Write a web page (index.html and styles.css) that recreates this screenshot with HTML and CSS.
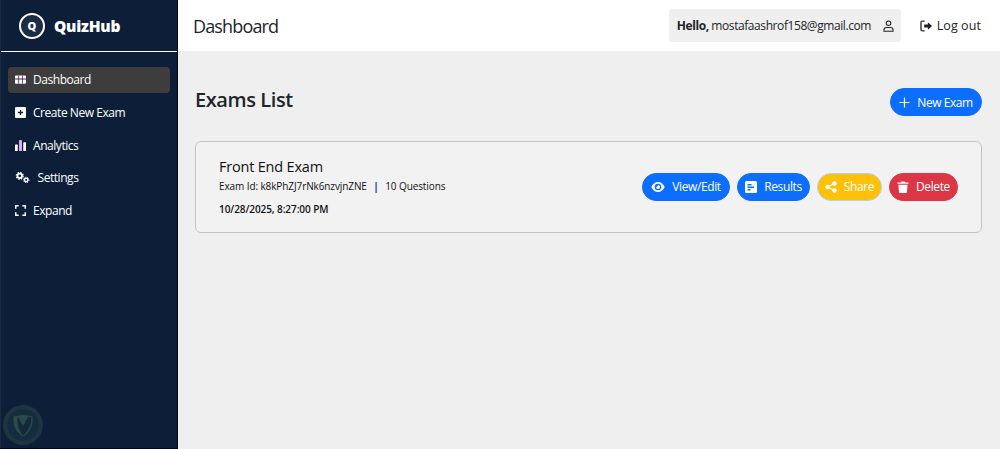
FILE: index.html
```html
<!DOCTYPE html>
<html lang="en">
<head>
<meta charset="utf-8">
<title>QuizHub</title>
<link rel="stylesheet" href="styles.css">
</head>
<body>
<div class="app">
  <aside class="sidebar">
    <div class="brand">
      <span class="logo">Q</span>
      <span class="brand-name">QuizHub</span>
    </div>
    <nav class="nav">
      <a class="nav-item active">
        <svg class="nav-icon" viewBox="0 0 12 10"><path fill="#fff" d="M0 1.500a1 1 0 0 1 1-1h10a1 1 0 0 1 1 1v7a1 1 0 0 1-1 1H1a1 1 0 0 1-1-1z"/><path fill="#5a1f63" d="M0 4h12v1H0zM3.600 .5h.9v9h-.9zM7.600 .5h.9v9h-.9z"/></svg>
        Dashboard
      </a>
      <a class="nav-item">
        <svg class="nav-icon" viewBox="0 0 12 12"><rect width="12" height="12" rx="1.200" fill="#fff"/><path d="M5.300 3.200h1.400v2.100h2.100v1.400H6.700v2.100H5.300V6.700H3.200V5.300h2.100z" fill="#0d1f38"/></svg>
        Create New Exam
      </a>
      <a class="nav-item">
        <svg class="nav-icon" viewBox="0 0 12 12"><rect x="0" y="5" width="3" height="7" rx=".6" fill="#fff"/><rect x="4.400" y="0" width="3.200" height="12" rx=".6" fill="#e6a8ff"/><rect x="9" y="2.500" width="3" height="9.500" rx=".6" fill="#fff"/></svg>
        Analytics
      </a>
      <a class="nav-item settings">
        <svg class="nav-icon gears" viewBox="0 0 16 12"><circle cx="5" cy="4.200" r="2.500" fill="none" stroke="#fff" stroke-width="2"/><circle cx="5" cy="4.200" r="3.800" fill="none" stroke="#fff" stroke-width="1.200" stroke-dasharray="1.500 1.500"/><circle cx="12" cy="8.700" r="1.900" fill="none" stroke="#fff" stroke-width="1.600"/><circle cx="12" cy="8.700" r="3" fill="none" stroke="#fff" stroke-width="1" stroke-dasharray="1.200 1.200"/></svg>
        Settings
      </a>
      <a class="nav-item">
        <svg class="nav-icon" viewBox="0 0 12 12"><path fill="none" stroke="#fff" stroke-width="1.600" d="M.8 4V.8H4M8 .8h3.200V4M11.200 8v3.200H8M4 11.200H.8V8"/></svg>
        Expand
      </a>
    </nav>
    <div class="watermark">
      <svg viewBox="0 0 40 40" class="watermark-mark"><circle cx="20" cy="20" r="19" fill="#2e4a4a" opacity=".5"/><circle cx="20" cy="20" r="15" fill="#162c3e"/><path d="M11 12c6-2 12-2 18 0 1 8-2 15-9 19-7-4-10-11-9-19z" fill="#2c4a4a"/><path d="M15 12l5 9 5-9 3 1c0 7-3 13-8 17-4-5-6-11-5-18z" fill="#14283e"/></svg>
    </div>
  </aside>
  <div class="main">
    <header class="topbar">
      <h1 class="page-title">Dashboard</h1>
      <div class="top-actions">
        <div class="user-chip">
          <span class="hello"><b>Hello,</b> mostafaashrof158@gmail.com</span>
          <svg class="user-icon" viewBox="0 0 12 13"><circle cx="6" cy="3.500" r="2.500" fill="none" stroke="#222" stroke-width="1.100"/><path d="M1 12.200v-1c0-1.800 1.400-3 3-3h4c1.600 0 3 1.200 3 3v1z" fill="none" stroke="#222" stroke-width="1.100"/></svg>
        </div>
        <a class="logout">
          <svg class="logout-icon" viewBox="0 0 14 13"><path d="M5 1.200H2.500A1.500 1.500 0 0 0 1 2.700v7.600a1.500 1.500 0 0 0 1.500 1.500H5" fill="none" stroke="#333" stroke-width="1.500"/><path d="M8.500 2.500l4.500 4-4.500 4V8H4.500V5h4z" fill="#222"/></svg>
          Log out
        </a>
      </div>
    </header>
    <main class="content">
      <div class="content-head">
        <h2 class="list-title">Exams List</h2>
        <button class="pill blue new-exam">
          <svg class="plus" viewBox="0 0 12 12"><path d="M6 .5v11M.5 6h11" stroke="#fff" stroke-width="1.300" fill="none"/></svg>
          New Exam
        </button>
      </div>
      <section class="card">
        <div class="card-info">
          <h3 class="exam-name">Front End Exam</h3>
          <p class="exam-meta">Exam Id: k8kPhZJ7rNk6nzvjnZNE <span class="sep">|</span> 10 Questions</p>
          <p class="exam-date">10/28/2025, 8:27:00 PM</p>
        </div>
        <div class="card-actions">
          <button class="pill blue">
            <svg class="btn-icon" viewBox="0 0 16 12"><path fill="#fff" fill-rule="evenodd" d="M8 0c3.600 0 6.500 2.500 8 6-1.500 3.500-4.400 6-8 6S1.500 9.500 0 6c1.500-3.500 4.400-6 8-6zm0 2a4 4 0 1 0 0 8 4 4 0 0 0 0-8zm0 1.600a2.400 2.400 0 1 1-2.400 2.400c.8.300 2.100-.6 2.400-2.400z"/></svg>
            View/Edit
          </button>
          <button class="pill blue">
            <svg class="btn-icon small" viewBox="0 0 12 12"><rect width="12" height="12" rx="1.500" fill="#fff"/><path d="M2.500 3h4v1.500h-4zM2.500 5.500h6.500V7H2.500zM2.500 8h3v1.500h-3z" fill="#0d6efd"/></svg>
            Results
          </button>
          <button class="pill yellow">
            <svg class="btn-icon small" viewBox="0 0 12 12"><path d="M9.500 2.500 2.500 6l7 3.500" stroke="#fff" stroke-width="1.200" fill="none"/><circle cx="9.500" cy="2.500" r="2.200" fill="#fff"/><circle cx="2.500" cy="6" r="2.200" fill="#fff"/><circle cx="9.500" cy="9.500" r="2.200" fill="#fff"/></svg>
            Share
          </button>
          <button class="pill red">
            <svg class="btn-icon small" viewBox="0 0 12 13"><path fill="#fff" d="M0 1.500h3.800L4.300.5h3.400l.5 1H12V3H0zM1 4h10l-.7 8a1 1 0 0 1-1 1H2.700a1 1 0 0 1-1-1z"/></svg>
            Delete
          </button>
        </div>
      </section>
    </main>
  </div>
</div>
</body>
</html>
```

FILE: styles.css
```css
* { box-sizing: border-box; }
html, body { margin: 0; height: 100%; }
body {
  font-family: "Open Sans", "Noto Sans", sans-serif;
  color: #212529;
  background: #efefef;
  overflow: hidden;
}
.app { display: flex; height: 449px; }

.sidebar {
  width: 177.500px;
  flex: none;
  display: flex;
  flex-direction: column;
  background: #0d1f38;
  border-left: 1px solid #1a2a40;
  border-right: 1px solid #05080d;
  border-bottom: 1px solid #05080d;
}
.brand {
  height: 52px;
  flex: none;
  display: flex;
  align-items: center;
  gap: 9px;
  padding-left: 18px;
  border-bottom: 1px solid #fff;
}
.logo {
  width: 26px;
  height: 26px;
  border: 2px solid #fff;
  border-radius: 50%;
  display: flex;
  align-items: center;
  justify-content: center;
  color: #fff;
  font-size: 11px;
  font-weight: 800;
  background: #1b2c45;
}
.brand-name {
  color: #fff;
  font-size: 15.500px;
  font-weight: 800;
  letter-spacing: -.25px;
}
.nav {
  display: flex;
  flex-direction: column;
  gap: 7px;
  padding: 15px 7px 0;
}
.nav-item {
  height: 25.700px;
  display: flex;
  align-items: center;
  gap: 7px;
  padding-left: 7px;
  border-radius: 4px;
  color: #fff;
  font-size: 12px;
  letter-spacing: -.45px;
}
.nav-item.active { background: #3d3d3d; }
.nav-icon { width: 11px; height: 11px; flex: none; }
.gears { width: 15px; }
.settings { gap: 7.500px; }
.watermark {
  margin-top: auto;
  height: 44px;
  padding-left: 1px;
}
.watermark-mark { width: 42px; height: 42px; display: block; }

.main { flex: 1; min-width: 0; display: flex; flex-direction: column; }
.topbar {
  height: 51px;
  flex: none;
  background: #fff;
  display: flex;
  align-items: center;
  justify-content: space-between;
  padding: 0 19px 0 15.500px;
}
.page-title {
  margin: 0;
  font-size: 18px;
  font-weight: 400;
  letter-spacing: -.85px;
}
.top-actions { display: flex; align-items: center; gap: 19px; }
.user-chip {
  width: 232px;
  height: 33px;
  display: flex;
  align-items: center;
  gap: 11px;
  padding: 0 8px;
  background: #efefef;
  border-radius: 3px;
}
.hello { font-size: 12px; letter-spacing: -.42px; white-space: nowrap; }
.hello b { font-weight: 700; }
.user-icon { width: 11px; height: 12px; flex: none; margin-left: 1px; }
.logout {
  display: flex;
  align-items: center;
  gap: 4px;
  font-size: 12.500px;
  letter-spacing: .08px;
}
.logout-icon { width: 13px; height: 12px; }

.content { flex: 1; padding: 34px 18px 0 17.500px; }
.content-head {
  display: flex;
  align-items: flex-start;
  justify-content: space-between;
  height: 31px;
}
.list-title {
  margin: 0;
  font-size: 20px;
  font-weight: 600;
  letter-spacing: -.42px;
  line-height: 30px;
}
.pill {
  height: 28px;
  display: inline-flex;
  align-items: center;
  justify-content: center;
  gap: 7px;
  border: 1px solid #a9c8f0;
  border-radius: 14px;
  color: #fff;
  font-family: inherit;
  font-size: 12px;
  letter-spacing: -.38px;
  padding: 0;
}
.blue { background: #0d6efd; border-color: #0d6efd; }
.yellow { background: #ffc107; border-color: #b9cfe8; }
.red { background: #dc3545; border-color: #dc3545; }
.new-exam { width: 92px; margin-top: 3px; letter-spacing: -.45px; }
.plus { width: 11px; height: 11px; }

.card {
  margin-top: 25px;
  height: 92px;
  border: 1px solid #c4c4c4;
  border-radius: 6px;
  background: #f2f2f2;
  display: flex;
  align-items: center;
  justify-content: space-between;
  padding: 0 23px 0 23px;
}
.exam-name {
  margin: 0;
  font-size: 14.500px;
  font-weight: 500;
  letter-spacing: -.2px;
  line-height: 18px;
  color: #111;
}
.exam-meta {
  margin: 3px 0 0;
  font-size: 10px;
  letter-spacing: -.1px;
  line-height: 14px;
  color: #111;
}
.sep { color: #0a3d8a; margin: 0 4px; font-weight: 700; }
.exam-date {
  margin: 9px 0 0;
  font-size: 10px;
  font-weight: 600;
  letter-spacing: -.07px;
  line-height: 14px;
  color: #111;
}
.card-info { margin-top: 0; }
.card-actions { display: flex; gap: 7px; margin-top: -1px; }
.card-actions .pill:nth-child(1) { width: 88px; }
.card-actions .pill:nth-child(2) { width: 73px; }
.card-actions .pill:nth-child(3) { width: 65px; }
.card-actions .pill:nth-child(4) { width: 69px; }
.btn-icon { width: 14px; height: 10px; }
.btn-icon.small { width: 12px; height: 12px; }
```
